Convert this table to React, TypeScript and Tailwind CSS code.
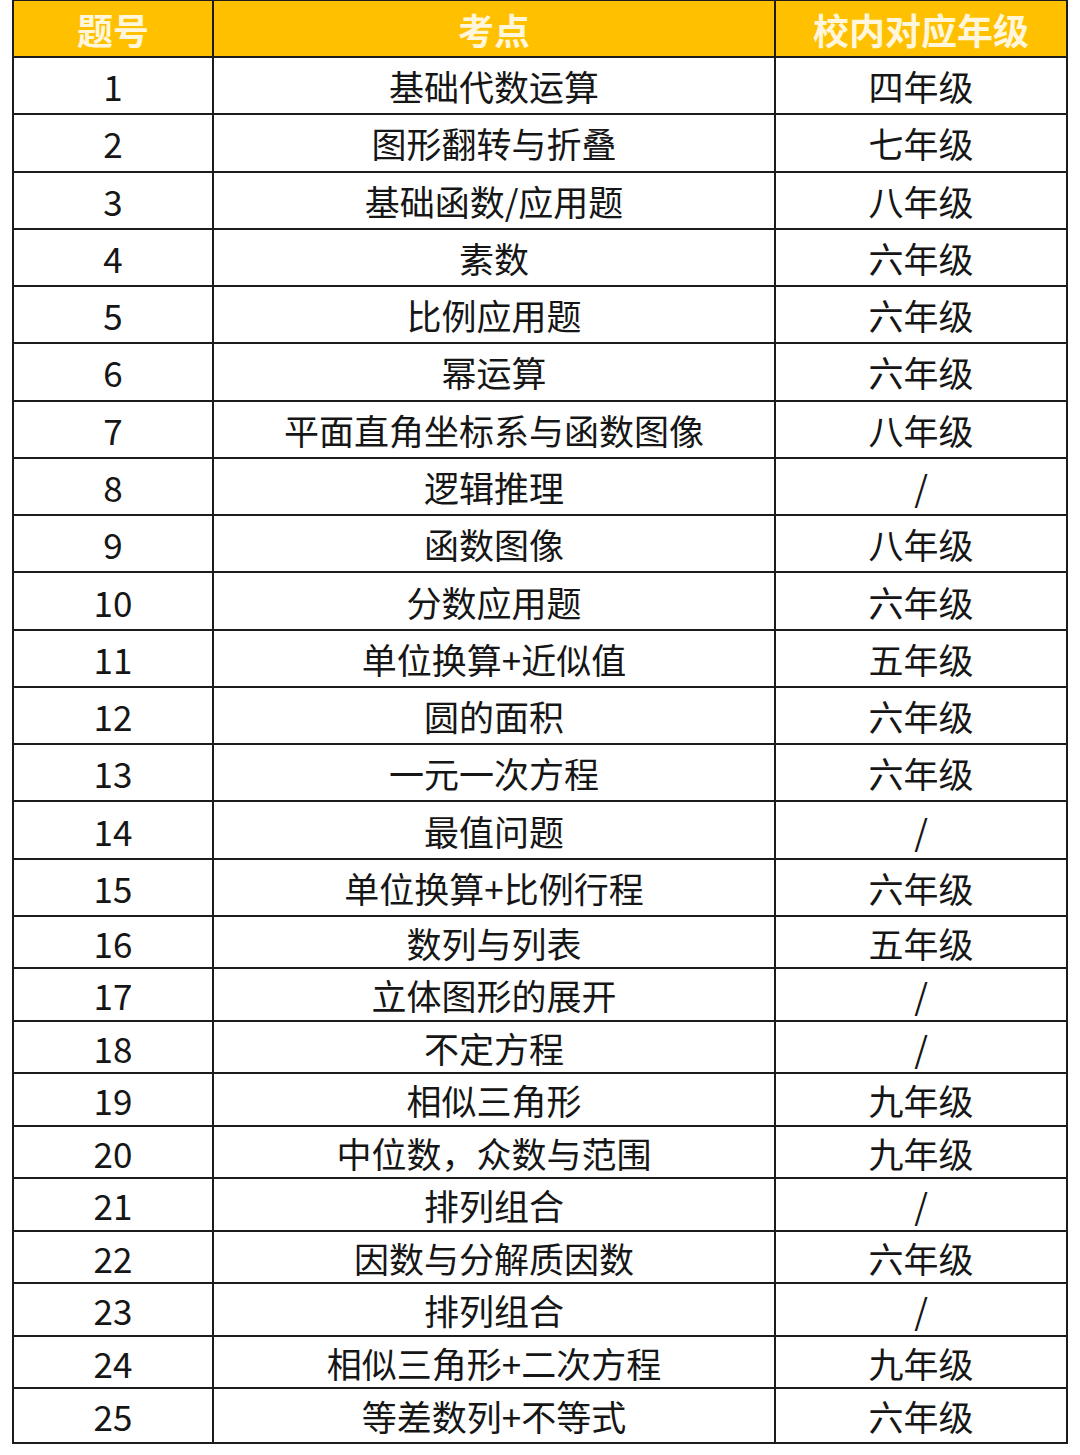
const rows: [string, string, string][] = [
  ["1", "基础代数运算", "四年级"],
  ["2", "图形翻转与折叠", "七年级"],
  ["3", "基础函数/应用题", "八年级"],
  ["4", "素数", "六年级"],
  ["5", "比例应用题", "六年级"],
  ["6", "幂运算", "六年级"],
  ["7", "平面直角坐标系与函数图像", "八年级"],
  ["8", "逻辑推理", "/"],
  ["9", "函数图像", "八年级"],
  ["10", "分数应用题", "六年级"],
  ["11", "单位换算+近似值", "五年级"],
  ["12", "圆的面积", "六年级"],
  ["13", "一元一次方程", "六年级"],
  ["14", "最值问题", "/"],
  ["15", "单位换算+比例行程", "六年级"],
  ["16", "数列与列表", "五年级"],
  ["17", "立体图形的展开", "/"],
  ["18", "不定方程", "/"],
  ["19", "相似三角形", "九年级"],
  ["20", "中位数，众数与范围", "九年级"],
  ["21", "排列组合", "/"],
  ["22", "因数与分解质因数", "六年级"],
  ["23", "排列组合", "/"],
  ["24", "相似三角形+二次方程", "九年级"],
  ["25", "等差数列+不等式", "六年级"],
];

const font = { fontFamily: '"Noto Sans CJK SC", "Noto Sans", sans-serif' };

export default function App() {
  return (
    <div className="min-h-[1455px] bg-white pl-[12px]" style={font}>
      <div className="w-[1056px] border-x-2 border-b-2 border-t border-[#1c1c1c]">
        {/* Header */}
        <div className="flex h-[57px] border-b-2 border-[#1c1c1c] bg-[#ffc000] text-[36px] font-bold leading-none text-[#fff6dc]">
          <div className="flex w-[200px] items-center justify-center border-r-2 border-[#1c1c1c]">题号</div>
          <div className="flex w-[562px] items-center justify-center border-r-2 border-[#1c1c1c]">考点</div>
          <div className="flex flex-1 items-center justify-center">校内对应年级</div>
        </div>

        {rows.map(([no, topic, grade], i) => (
          <div
            key={no}
            className={
              "flex text-[35px] leading-none text-[#161616] " +
              (i < 15 ? "h-[57.27px] " : "h-[52.5px] ") +
              (i < rows.length - 1 ? "border-b-2 border-[#1c1c1c]" : "")
            }
          >
            <div className="flex w-[200px] items-center justify-center border-r-2 border-[#1c1c1c]">{no}</div>
            <div className="flex w-[562px] items-center justify-center border-r-2 border-[#1c1c1c]">{topic}</div>
            <div className="flex flex-1 items-center justify-center">{grade}</div>
          </div>
        ))}
      </div>
    </div>
  );
}
